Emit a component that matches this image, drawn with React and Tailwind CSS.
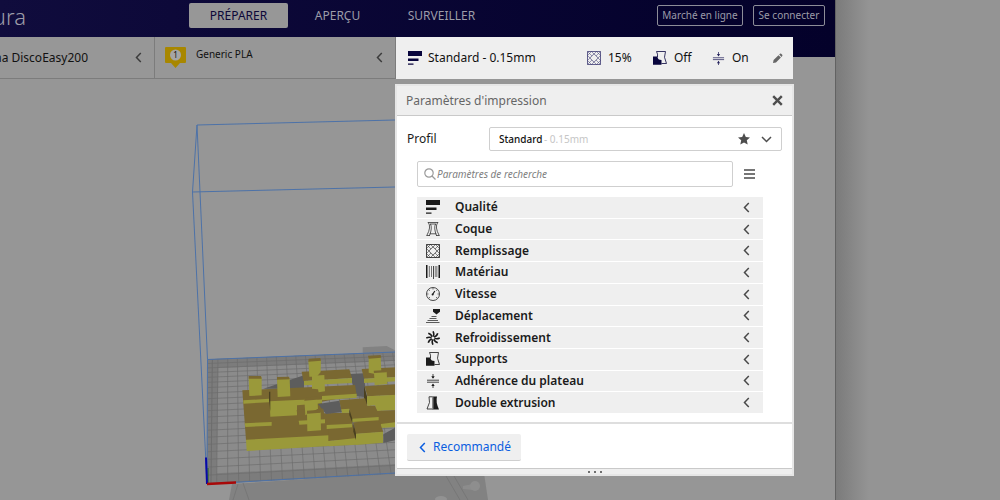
import React from "react";

function Icon({ children, className = "w-[14px] h-[14px]", box = "0 0 14 14" }) {
  return (
    <svg viewBox={box} className={`shrink-0 ${className}`} fill="none" stroke="currentColor" aria-hidden="true">
      {children}
    </svg>
  );
}

const glyphs = {
  quality: (
    <g fill="currentColor" stroke="none">
      <path d="M0 0h14v5H0zM0 7.5h10.5v2.5H0zM0 12.5h5.500v1.200H0z" />
    </g>
  ),
  shell: (
    <g strokeWidth="0.7">
      <path d="M1.800 .5h10.400M.5 13.500h3.500M10 13.500h3.500M2.300 .5Q5.500 5 .8 13.500M11.700 .5Q8.500 5 13.200 13.500" />
      <path d="M4.500 2Q6.500 6 3.500 13.500M9.500 2Q7.500 6 10.500 13.500M4 2h6M3.800 11.800h6.400" />
    </g>
  ),
  infill: (
    <g strokeWidth="0.8">
      <path d="M.5 .5h13v13H.5z" />
      <path d="M.5 4.500L4.500 .5M.5 9.500L9.500 .5M.5 13.500L13.500 .5M4.500 13.500L13.500 4.500M9.500 13.500L13.500 9.500M.5 4.500L9.500 13.500M.5 .5L13.500 13.500M4.500 .5L13.500 9.500M9.500 .5L13.500 4.500M.5 9.500L4.500 13.500" strokeWidth="0.5" />
      <path d="M7 2.800L11.200 7L7 11.200L2.800 7z" fill="#efefef" strokeWidth="0.600" />
    </g>
  ),
  material: (
    <g fill="currentColor" stroke="none">
      <path d="M0 0h1.500v13H0zM12.500 0H14v13h-1.500zM2.900 1h.6v11h-.6zM5 1h.6v11H5zM7 1h.8v14H7zM8.900 1h.5v11h-.5zM10.600 1h.6v11h-.6z" />
    </g>
  ),
  speed: (
    <g strokeWidth="0.8">
      <circle cx="7" cy="7" r="6.500" />
      <path d="M7 1v1.500M1 7h1.500M11.500 7H13M2.800 2.800l1 1M11.200 2.800l-1 1M3 11l1-1M11 11l-1-1" strokeWidth="0.6" />
      <path d="M6.600 7.500L8.800 4" strokeWidth="1.200" />
      <circle cx="6.600" cy="7.500" r="1" fill="currentColor" stroke="none" />
    </g>
  ),
  travel: (
    <g strokeWidth="1">
      <path d="M7 0h7v2.800L12 4.200 10.500 5.500 9 4.200 7 2.800z" fill="currentColor" stroke="none" />
      <path d="M5.500 7.500h5M3.500 9.500h7M1.500 11.500h10.500M0 13.500h13.500" strokeWidth="0.7" />
    </g>
  ),
  cooling: (
    <g strokeWidth="1.600">
      {[0, 45, 90, 135, 180, 225, 270, 315].map((a) => (
        <path key={a} d="M7 5.500Q8.600 3.500 7 .3" transform={`rotate(${a} 7 7)`} />
      ))}
    </g>
  ),
  support: (
    <g strokeWidth="0.8">
      <path d="M3.500 .5H12.500Q10 6 13.500 12.500H8.500M3.500 .5Q5 3 4.500 6" />
      <path d="M0 5.500h4.500Q4.500 9 8.500 9v4.800H0z" fill="currentColor" stroke="none" />
    </g>
  ),
  adhesion: (
    <g strokeWidth="0.8">
      <path d="M1 6.200h12M1 8.200h12" strokeWidth="0.8" />
      <path d="M7 0v4M7 10.500v3.500" />
      <path d="M5.300 2.200h3.400L7 4.800zM5.300 12h3.400L7 9.500z" fill="currentColor" stroke="none" />
    </g>
  ),
  dual: (
    <g strokeWidth="0.8">
      <path d="M6 .8H3Q5 6 1 13h5" />
      <path d="M7.300 .5H11Q9.500 6 13 13.500H7.300z" fill="currentColor" stroke="none" />
      <path d="M6.800 0v14" strokeWidth="0.7" />
    </g>
  ),
};

function Chevron({ dir = "left", className = "w-[7px] h-[11px]" }) {
  return dir === "left" ? (
    <Icon box="0 0 7 11" className={className}>
      <path d="M5.800 1L1.500 5.500L5.800 10" strokeWidth="1.500" />
    </Icon>
  ) : (
    <Icon box="0 0 11 7" className="w-[11px] h-[7px]">
      <path d="M1 1L5.500 5.500L10 1" strokeWidth="1.500" />
    </Icon>
  );
}

const TOP = "#7a6831";
const FRONT = "#9a993a";
const SHADE = "#5d5d5d";

const blocks = [
  [SHADE, "220,146 342,106 342,146"],
  [SHADE, "480,102 522,100 528,172 496,168"],
  [TOP, "335,95 478,88 486,114 340,123"],
  [FRONT, "342,123 486,114 486,129 342,136"],
  [TOP, "515,87 620,82 620,111 522,116"],
  [FRONT, "522,116 620,111 620,124 522,129"],
  [TOP, "157,151 495,135 500,165 395,185 402,220 480,218 498,298 168,300"],
  [FRONT, "396,168 500,161 500,173 396,181"],
  [FRONT, "160,181 237,176 237,187 160,191"],
  [FRONT, "239,184 318,180 396,178 396,190 321,196 321,226 241,230"],
  ["#4a4020", "237,155 241,155 241,215 237,180"],
  [SHADE, "384,192 448,182 456,216 408,222"],
  [TOP, "320,210 400,206 402,248 326,252"],
  [FRONT, "326,242 405,238 405,250 328,254"],
  [FRONT, "164,250 245,246 245,257 166,261"],
  [FRONT, "410,255 486,251 486,262 410,267"],
  [TOP, "524,139 620,133 620,165 532,169"],
  [FRONT, "530,169 620,164 620,210 560,213 555,196 532,198"],
  ["#4a4020", "522,139 531,169 531,198 522,178"],
  [TOP, "448,181 525,175 532,198 555,197 562,213 620,210 620,252 566,256 485,247 478,208 454,210"],
  [FRONT, "454,208 478,206 478,218 456,219"],
  [FRONT, "486,236 566,231 566,241 486,246"],
  [FRONT, "572,252 620,246 620,261 574,264"],
  ["#4a4020", "478,208 487,236 487,248 478,225"],
  [FRONT, "168,299 417,286 417,318 170,333"],
  [TOP, "415,270 500,265 500,297 415,303"],
  [FRONT, "417,303 500,294 500,314 417,319"],
  [TOP, "490,248 568,243 580,276 498,282"],
  [FRONT, "498,281 579,275 580,308 498,315"],
  ["#4a4020", "490,248 498,281 498,300 490,275"],
  [SHADE, "580,283 618,262 618,300 580,309"],
  [FRONT, "176,113 215,112 215,166 178,168"],
  [TOP, "176,108 213,108 215,116 176,116"],
  [FRONT, "261,116 299,115 301,169 263,171"],
  [TOP, "261,111 297,110 299,118 261,119"],
  [FRONT, "355,62 393,59 392,96 380,110 358,110"],
  [TOP, "356,56 391,54 393,62 355,65"],
  [FRONT, "366,107 403,105 405,154 386,157 384,148 366,146"],
  [FRONT, "343,176 382,174 384,206 346,226"],
  [TOP, "343,172 382,170 396,178 343,182"],
  [FRONT, "351,220 392,217 393,271 352,274"],
  [TOP, "351,212 390,209 392,218 351,221"],
  [FRONT, "536,53 572,50 574,97 552,101 536,98"],
  [TOP, "534,47 572,45 574,53 536,56"],
  [FRONT, "552,97 590,95 592,132 554,136"],
  [TOP, "551,92 589,90 590,97 552,99"],
];

function Scene() {
  const rows = Array.from({ length: 21 }, (_, i) => 58 + i * 12.2 + i * i * 0.32);
  const cols = Array.from({ length: 19 }, (_, i) => i);
  return (
    <svg width="835" height="500" viewBox="0 0 835 500" className="absolute left-0 top-0" aria-hidden="true">
      <defs>
        <clipPath id="plate">
          <path d="M53 58L840 27V389L50 432z" />
        </clipPath>
      </defs>
      <path d="M232 484L395 473H484L488 500H229z" fill="#828282" />
      <path d="M238 484l-5 16M243 483l6 17M446 476l14 24M454 476l14 24" stroke="#777" />
      <path d="M463 486l10-2v6l-10-1z" fill="#8c8c8c" />
      <circle cx="475" cy="486" r="5" fill="#8e8e8e" />
      <ellipse cx="441" cy="499" rx="6" ry="3" fill="#929292" />
      <g transform="translate(190 340) scale(.33333)">
        <path d="M518 22L590 18L625 36L518 42z" fill="#828282" />
        <path d="M53 58L840 27V389L50 432z" fill="#8b8b8b" />
        <path d="M53 58L620 36V62L85 84L80 400L620 372V402L50 432z" fill="#7c7c7c" />
        <g clipPath="url(#plate)" stroke="#6c6c6c" strokeWidth="2">
          {rows.map((y, i) => (
            <path key={i} d={`M53 ${y}L620 ${y - 22 - i * 0.4}`} />
          ))}
          {cols.map((i) => (
            <path key={i} d={`M${84 + 29 * i} 30L${80 + 33 * i} 432`} />
          ))}
          <path d="M67 58L63 432" strokeWidth="3" />
        </g>
        {blocks.map(([fill, points], i) => (
          <polygon key={i} fill={fill} points={points} />
        ))}
      </g>
      <g fill="none" stroke="#4d72a8" strokeWidth="1">
        <path d="M395 120L197 125L192.500 192L395 187M197 125L207.500 359.500L395 352M192.500 192L207 484L395 473M207.500 359.500L207 484" />
      </g>
      <path d="M208 468v15" stroke="#1e6b1e" />
      <path d="M206 457.500L207 484" stroke="#0808a8" strokeWidth="2" />
      <path d="M207 484L236 482.500" stroke="#a80808" strokeWidth="2.500" />
    </svg>
  );
}

const categories = [
  ["Qualité", "quality"],
  ["Coque", "shell"],
  ["Remplissage", "infill"],
  ["Matériau", "material"],
  ["Vitesse", "speed"],
  ["Déplacement", "travel"],
  ["Refroidissement", "cooling"],
  ["Supports", "support"],
  ["Adhérence du plateau", "adhesion"],
  ["Double extrusion", "dual"],
];

function Header() {
  return (
    <header className="flex h-[57px] items-start justify-between bg-linear-to-r from-[#100c3d] to-[#04012a] text-[#9c9ca8]">
      <div className="flex items-start">
        <div className="flex w-[189px]">
          <span className="flex w-[26px] justify-end overflow-hidden text-[22px] leading-8 font-light">ura</span>
        </div>
        <nav className="mt-[3px] flex h-[25px] items-stretch text-[12px]">
          <button className="w-[99px] rounded-xs bg-[#979797] text-[#0c0838]">PRÉPARER</button>
          <button className="w-[99px]">APERÇU</button>
          <button className="w-[109px]">SURVEILLER</button>
        </nav>
      </div>
      <div className="mt-[5px] mr-[10px] flex gap-[10px] text-[10px]">
        <button className="h-[21px] w-[86px] rounded-xs border border-[#8d8d98]">Marché en ligne</button>
        <button className="h-[21px] w-[72px] rounded-xs border border-[#8d8d98]">Se connecter</button>
      </div>
    </header>
  );
}

function StageBar() {
  return (
    <div className="relative -mt-[20px] mr-[42px] flex h-[42px] text-[12px] text-[#111]">
      <button className="flex w-[155px] items-center justify-between border-r border-b border-[#7c7c7c] bg-[#979797] pr-[12px]">
        <span className="flex w-[88px] justify-end overflow-hidden whitespace-nowrap">na DiscoEasy200</span>
        <span className="text-[#3c3c3c]"><Chevron /></span>
      </button>
      <button className="flex w-[241px] items-center border-r border-b border-[#7c7c7c] bg-[#979797] pr-[12px] pl-[10px]">
        <svg viewBox="0 0 21 21" className="h-[21px] w-[21px]" role="img" aria-label="Extrudeuse 1">
          <path d="M1 0h19a1 1 0 0 1 1 1v14a1 1 0 0 1-1 1h-5l-4.500 5L6 16H1a1 1 0 0 1-1-1V1a1 1 0 0 1 1-1z" fill="#a88700" />
          <circle cx="10.500" cy="8" r="5.500" fill="#a5a5a5" />
          <text x="10.500" y="11" textAnchor="middle" fontSize="8" fill="#111">1</text>
        </svg>
        <span className="mb-[7px] ml-[10px] flex-1 text-left text-[10px]">Generic PLA</span>
        <span className="text-[#3c3c3c]"><Chevron /></span>
      </button>
      <button className="flex flex-1 items-center bg-[#efefef] pr-[10px] pl-[12px]">
        <span className="text-[#08053d]"><Icon>{glyphs.quality}</Icon></span>
        <span className="ml-[6px] flex-1 text-left">Standard - 0.15mm</span>
        <span className="flex w-[66px] items-center gap-[7px]">
          <span className="text-[#3c3a72]"><Icon>{glyphs.infill}</Icon></span>15%
        </span>
        <span className="flex w-[59px] items-center gap-[7px]">
          <span className="text-[#08053d]"><Icon>{glyphs.support}</Icon></span>Off
        </span>
        <span className="flex w-[60px] items-center gap-[7px]">
          <span className="text-[#25225c]"><Icon className="h-[13px] w-[13px]">{glyphs.adhesion}</Icon></span>On
        </span>
        <span className="text-[#666]">
          <Icon box="0 0 11 11" className="h-[11px] w-[11px]">
            <path d="M1 10l.6-3L6.500 2.200l2.400 2.400L4 9.400zM7.200 1.500L8 .8q.6-.5 1.200 0l1 1q.6.600 0 1.200l-.7.900z" fill="currentColor" stroke="none" />
          </Icon>
        </span>
      </button>
    </div>
  );
}

function SettingsPanel() {
  return (
    <section className="relative mt-[5px] mr-[41px] ml-[395px] border-2 border-[#e6e6e6] bg-white text-[#1b1b1b]">
      <div className="flex h-[30px] items-center justify-between border-b border-[#c9c9c9] bg-[#efefef] pr-[9px] pl-[9px]">
        <h2 className="text-[12px] text-[#666]">Paramètres d'impression</h2>
        <button aria-label="Fermer" className="text-[#4e4e4e]">
          <Icon box="0 0 11 11" className="h-[11px] w-[11px]">
            <path d="M1.200 1.200l8.600 8.600M9.800 1.200l-8.600 8.600" strokeWidth="2.400" />
          </Icon>
        </button>
      </div>

      <div className="flex items-center pt-[11px] pr-[10px] pl-[10px]">
        <label htmlFor="profile" className="w-[82px] text-[12px]">Profil</label>
        <div className="relative flex-1">
          <select id="profile" className="block h-[24px] w-full appearance-none rounded-xs border border-[#cfcfcf] bg-white pl-[9px] text-[10px] font-medium text-[#111]">
            <option>Standard</option>
          </select>
          <span className="pointer-events-none absolute inset-y-0 left-[55px] flex items-center text-[10px] text-[#c6c6c6]">- 0.15mm</span>
          <span className="pointer-events-none absolute inset-y-0 right-[10px] flex items-center gap-[11px] text-[#4e4e4e]">
            <Icon box="0 0 12 12" className="h-[12px] w-[12px]">
              <path d="M6 0l1.800 4 4.200.400-3.200 2.900.9 4.300L6 9.400l-3.700 2.200.9-4.300L0 4.400 4.200 4z" fill="currentColor" stroke="none" />
            </Icon>
            <Chevron dir="down" />
          </span>
        </div>
      </div>

      <div className="flex items-center gap-[11px] pt-[10px] pl-[20px]">
        <label className="flex h-[26px] w-[316px] items-center gap-px rounded-xs border border-[#cfcfcf] pl-[6px] text-[#9a9a9a]">
          <Icon box="0 0 12 12" className="h-[12px] w-[12px]">
            <circle cx="5" cy="5" r="4.200" strokeWidth="1.200" />
            <path d="M8 8l3.500 3.500" strokeWidth="1.200" />
          </Icon>
          <input aria-label="Paramètres de recherche" placeholder="Paramètres de recherche" className="min-w-0 flex-1 bg-transparent text-[10px] italic outline-none placeholder:text-[#808080]" />
        </label>
        <button aria-label="Menu" className="text-[#4a4a4a]">
          <Icon box="0 0 11 10" className="h-[10px] w-[11px]">
            <path d="M0 1h11M0 5h11M0 9h11" strokeWidth="1.700" />
          </Icon>
        </button>
      </div>

      <ul className="mt-[10px] mr-[29px] ml-[20px] grid h-[216px] auto-rows-fr gap-px">
        {categories.map(([name, icon]) => (
          <li key={name} className="flex bg-[#efefef]">
            <button className="flex flex-1 items-center pr-[13px] pl-[9px] text-left">
              <Icon>{glyphs[icon]}</Icon>
              <span className="ml-[15px] flex-1 text-[12px] leading-5 font-semibold">{name}</span>
              <span className="text-[#4a4a4a]"><Chevron /></span>
            </button>
          </li>
        ))}
      </ul>

      <footer className="mt-[9px] border-t-2 border-[#dedede] pt-[10px] pb-[7px] pl-[10px]">
        <button className="flex h-[27px] w-[114px] items-center gap-[7px] rounded-xs border-b border-[#cfcfcf] bg-[#efefef] pl-[12px] text-[12px] text-[#0b5ee0]">
          <Chevron />
          Recommandé
        </button>
      </footer>
      <div className="flex h-[6px] items-center justify-center gap-[4px] border-t border-[#c9c9c9] bg-[#efefef]">
        <i className="size-[2px] rounded-full bg-[#444]" />
        <i className="size-[2px] rounded-full bg-[#444]" />
        <i className="size-[2px] rounded-full bg-[#444]" />
      </div>
    </section>
  );
}

export default function App() {
  return (
    <div className="flex min-h-screen bg-[#949494] font-['Noto_Sans',sans-serif]">
      <main className="relative flex-1 border-r border-[#626262] bg-[#969696]">
        <Scene />
        <div className="relative">
          <Header />
          <StageBar />
          <SettingsPanel />
        </div>
      </main>
      <aside className="w-[164px] bg-linear-to-r from-[#7b7b7b] to-[#949494] to-20%" />
    </div>
  );
}
